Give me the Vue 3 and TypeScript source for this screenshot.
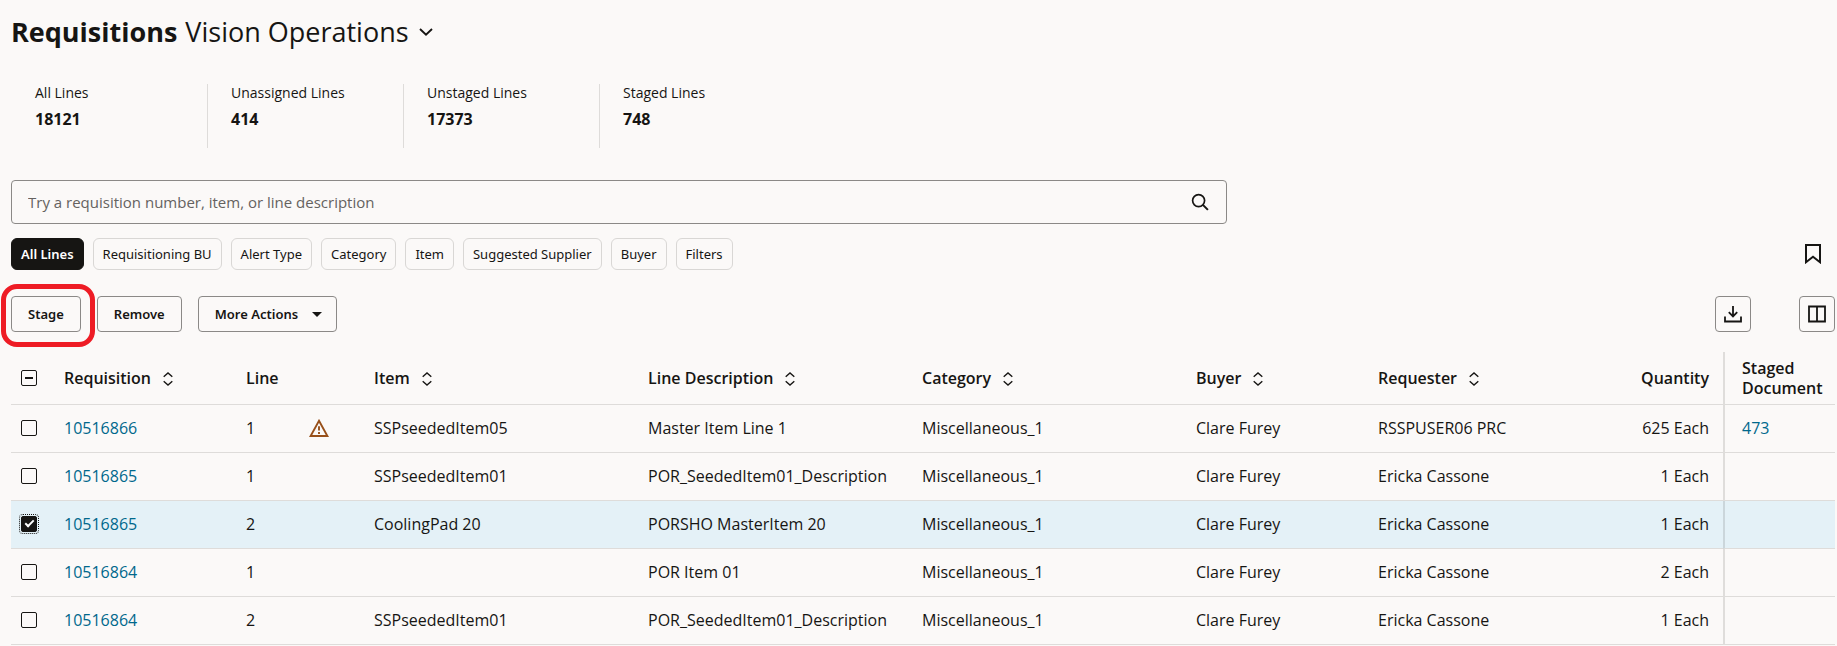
<script setup lang="ts">
import { ref } from 'vue'

interface Line {
  id: number
  requisition: string
  line: number
  warning: boolean
  item: string
  description: string
  category: string
  buyer: string
  requester: string
  quantity: string
  staged: string
  checked: boolean
}

const stats = [
  { label: 'All Lines', value: '18121' },
  { label: 'Unassigned Lines', value: '414' },
  { label: 'Unstaged Lines', value: '17373' },
  { label: 'Staged Lines', value: '748' },
]

const chips = [
  'All Lines',
  'Requisitioning BU',
  'Alert Type',
  'Category',
  'Item',
  'Suggested Supplier',
  'Buyer',
  'Filters',
]
const activeChip = ref('All Lines')
const query = ref('')

const columns = [
  { key: 'requisition', label: 'Requisition', sortable: true },
  { key: 'line', label: 'Line', sortable: false },
  { key: 'alert', label: '', sortable: false },
  { key: 'item', label: 'Item', sortable: true },
  { key: 'description', label: 'Line Description', sortable: true },
  { key: 'category', label: 'Category', sortable: true },
  { key: 'buyer', label: 'Buyer', sortable: true },
  { key: 'requester', label: 'Requester', sortable: true },
  { key: 'quantity', label: 'Quantity', sortable: false },
  { key: 'staged', label: 'Staged Document', sortable: false },
]

const base = { warning: false, category: 'Miscellaneous_1', buyer: 'Clare Furey', staged: '', checked: false }

const rows = ref<Line[]>([
  { ...base, id: 1, requisition: '10516866', line: 1, warning: true, item: 'SSPseededItem05', description: 'Master Item Line 1', requester: 'RSSPUSER06 PRC', quantity: '625 Each', staged: '473' },
  { ...base, id: 2, requisition: '10516865', line: 1, item: 'SSPseededItem01', description: 'POR_SeededItem01_Description', requester: 'Ericka Cassone', quantity: '1 Each' },
  { ...base, id: 3, requisition: '10516865', line: 2, item: 'CoolingPad 20', description: 'PORSHO MasterItem 20', requester: 'Ericka Cassone', quantity: '1 Each', checked: true },
  { ...base, id: 4, requisition: '10516864', line: 1, item: '', description: 'POR Item 01', requester: 'Ericka Cassone', quantity: '2 Each' },
  { ...base, id: 5, requisition: '10516864', line: 2, item: 'SSPseededItem01', description: 'POR_SeededItem01_Description', requester: 'Ericka Cassone', quantity: '1 Each' },
])
</script>

<template>
  <main class="page">
    <header class="title">
      <h1>Requisitions</h1>
      <button class="unit" type="button">
        Vision Operations
        <svg width="14" height="8" viewBox="0 0 14 8"><path d="M1 1l6 5.6L13 1" fill="none" stroke="currentColor" stroke-width="1.9" /></svg>
      </button>
    </header>

    <section class="stats">
      <div v-for="s in stats" :key="s.label" class="stat">
        <div class="stat-label">{{ s.label }}</div>
        <div class="stat-value">{{ s.value }}</div>
      </div>
    </section>

    <form class="search" @submit.prevent>
      <input v-model="query" type="text" aria-label="Search requisition lines" placeholder="Try a requisition number, item, or line description" />
      <button type="submit" aria-label="Search">
        <svg width="18" height="18" viewBox="0 0 18 18"><circle cx="7.6" cy="7.6" r="6" fill="none" stroke="currentColor" stroke-width="1.7" /><path d="M11.9 11.9l5 5" stroke="currentColor" stroke-width="2" /></svg>
      </button>
    </form>

    <div class="filters">
      <button v-for="c in chips" :key="c" type="button" class="chip" :class="{ active: c === activeChip }" @click="activeChip = c">{{ c }}</button>
      <button type="button" class="bookmark" aria-label="Save search">
        <svg width="18" height="20" viewBox="0 0 18 20"><path d="M2 1h14v17.2l-7-5.4-7 5.4z" fill="none" stroke="currentColor" stroke-width="2" /></svg>
      </button>
    </div>

    <div class="toolbar">
      <div class="marked">
        <button type="button" class="action">Stage</button>
        <span class="marker"></span>
      </div>
      <button type="button" class="action">Remove</button>
      <button type="button" class="action menu">
        More Actions
        <svg width="10" height="5" viewBox="0 0 10 5"><path d="M0 0h10L5 5z" fill="currentColor" /></svg>
      </button>
      <div class="tools">
        <button type="button" class="tool" aria-label="Download">
          <svg width="18" height="18" viewBox="0 0 18 18" fill="none" stroke="currentColor" stroke-width="1.8"><path d="M9 1v10.200M4.800 7.200L9 11.400l4.200-4.200M1 11.500v5h16v-5" /></svg>
        </button>
        <button type="button" class="tool" aria-label="Manage columns">
          <svg width="18" height="18" viewBox="0 0 18 18" fill="none" stroke="currentColor" stroke-width="1.8"><path d="M1 1.500h16v15h-16zM9 1.500v15" /></svg>
        </button>
      </div>
    </div>

    <table>
      <colgroup>
        <col class="c-check" />
        <col v-for="c in columns" :key="c.key" :class="'c-' + c.key" />
      </colgroup>
      <thead>
        <tr>
          <th class="check"><input type="checkbox" class="mixed" aria-label="Select all lines" /></th>
          <th v-for="c in columns" :key="c.key" scope="col" :class="c.key">
            {{ c.label }}<button v-if="c.sortable" type="button" class="sort" :aria-label="'Sort by ' + c.label"><svg width="10" height="14" viewBox="0 0 10 14"><path d="M.7 4.700L5 1l4.300 3.700M.7 9.300L5 13l4.300-3.700" fill="none" stroke="currentColor" stroke-width="1.400" /></svg></button>
          </th>
        </tr>
      </thead>
      <tbody>
        <tr v-for="r in rows" :key="r.id" :class="{ selected: r.checked }">
          <td class="check"><input v-model="r.checked" type="checkbox" :aria-label="'Select ' + r.requisition + ' line ' + r.line" /></td>
          <td><a href="#">{{ r.requisition }}</a></td>
          <td>{{ r.line }}</td>
          <td class="alert">
            <svg v-if="r.warning" width="20" height="18" viewBox="0 0 20 18"><path d="M10 1.800L18.400 17H1.600z" fill="none" stroke="#98501a" stroke-width="1.900" /><path d="M10 7.200v4.400M10 13v2" stroke="#98501a" stroke-width="1.900" /></svg>
          </td>
          <td>{{ r.item }}</td>
          <td>{{ r.description }}</td>
          <td>{{ r.category }}</td>
          <td>{{ r.buyer }}</td>
          <td>{{ r.requester }}</td>
          <td class="quantity">{{ r.quantity }}</td>
          <td class="staged"><a v-if="r.staged" href="#">{{ r.staged }}</a></td>
        </tr>
      </tbody>
    </table>
  </main>
</template>

<style>
body {
  background: #fbf9f8;
}
</style>

<style scoped>
.page {
  padding: 12px 2px 0 11px;
  color: #161513;
  font-family: 'Open Sans', 'Noto Sans', sans-serif;
  font-size: 16px;
  line-height: 20px;
}
button,
input {
  font: inherit;
  color: inherit;
  margin: 0;
  padding: 0;
  border: 0;
  background: none;
  box-sizing: border-box;
}
svg {
  display: block;
}
.title {
  display: flex;
  align-items: center;
  gap: 8px;
  height: 40px;
}
h1 {
  margin: 0;
  font-size: 27px;
  line-height: 40px;
  font-weight: 700;
}
.unit {
  display: flex;
  align-items: center;
  gap: 10px;
  font-size: 27px;
  line-height: 40px;
}
.stats {
  display: flex;
  margin-top: 32px;
}
.stat {
  width: 196px;
  height: 64px;
  box-sizing: border-box;
  padding-left: 23px;
  border-left: 1px solid #dedcda;
}
.stat:first-child {
  border-left-color: transparent;
}
.stat-label {
  font-size: 14px;
  line-height: 18px;
}
.stat-value {
  margin-top: 7px;
  font-weight: 700;
}
.search {
  display: flex;
  align-items: center;
  box-sizing: border-box;
  width: calc(100% * 2 / 3);
  height: 44px;
  margin-top: 32px;
  padding: 0 17px 0 16px;
  border: 1px solid #8b8987;
  border-radius: 4px;
}
.search input {
  flex: 1;
  outline: 0;
  font-size: 15px;
}
.search input::placeholder {
  color: #65625f;
  opacity: 1;
}
.filters {
  display: flex;
  gap: 9px;
  margin-top: 14px;
}
.chip {
  height: 32px;
  padding: 0 9px;
  border: 1px solid #d9d7d5;
  border-radius: 6px;
  font-family: 'Noto Sans', 'Open Sans', sans-serif;
  font-size: 13px;
}
.chip.active {
  background: #161513;
  border-color: #161513;
  color: #fff;
  font-weight: 600;
}
.bookmark {
  margin: 0 13px 0 auto;
}
.toolbar {
  display: flex;
  gap: 16px;
  margin-top: 26px;
}
.marked {
  display: flex;
  position: relative;
}
.marker {
  position: absolute;
  inset: -12px -14px -15px -10px;
  border: 5px solid #ee1c25;
  border-radius: 16px;
  pointer-events: none;
}
.action {
  height: 36px;
  padding: 0 16px;
  border: 1px solid #8b8987;
  border-radius: 4px;
  font-family: 'Noto Sans', 'Open Sans', sans-serif;
  font-size: 13px;
  font-weight: 600;
}
.menu {
  display: flex;
  align-items: center;
  gap: 14px;
  padding-right: 14px;
}
.tools {
  display: flex;
  gap: 48px;
  margin-left: auto;
}
.tool {
  display: grid;
  place-items: center;
  width: 36px;
  height: 36px;
  border: 1px solid #8b8987;
  border-radius: 4px;
}
table {
  width: 100%;
  margin-top: 20px;
  table-layout: fixed;
  border-collapse: separate;
  border-spacing: 0;
}
.c-check { width: 37px; }
.c-requisition { width: 182px; }
.c-line { width: 63px; }
.c-alert { width: 65px; }
.c-item { width: 274px; }
.c-description { width: 274px; }
.c-category { width: 274px; }
.c-buyer { width: 182px; }
.c-requester { width: 182px; }
.c-quantity { width: 179px; }
.c-staged { width: 112px; }
th,
td {
  box-sizing: border-box;
  height: 48px;
  padding: 0 0 1px 16px;
  border-bottom: 1px solid #dedcda;
  text-align: left;
  vertical-align: middle;
  white-space: nowrap;
}
th {
  height: 53px;
  font-weight: 600;
}
.check {
  padding-left: 10px;
}
.quantity {
  padding-right: 14px;
  text-align: right;
}
.staged {
  padding-left: 17px;
  border-left: 2px solid rgba(22, 21, 19, 0.12);
  white-space: normal;
}
.sort {
  display: inline-block;
  margin-left: 12px;
  vertical-align: -2px;
}
.selected td {
  background: #e4f1f7;
}
a {
  color: #00688c;
  text-decoration: none;
}
input[type='checkbox'] {
  appearance: none;
  display: grid;
  place-items: center;
  width: 16px;
  height: 16px;
  border: 1px solid #161513;
  border-radius: 2px;
}
.mixed::before {
  content: '';
  width: 8px;
  height: 2px;
  background: #161513;
}
input[type='checkbox']:checked {
  background: #161513;
  outline: 1px dotted #161513;
  outline-offset: 1px;
}
input[type='checkbox']:checked::before {
  content: '';
  width: 7px;
  height: 3px;
  margin-bottom: 3px;
  border: solid #fff;
  border-width: 0 0 2px 2px;
  transform: rotate(-45deg);
}
</style>
